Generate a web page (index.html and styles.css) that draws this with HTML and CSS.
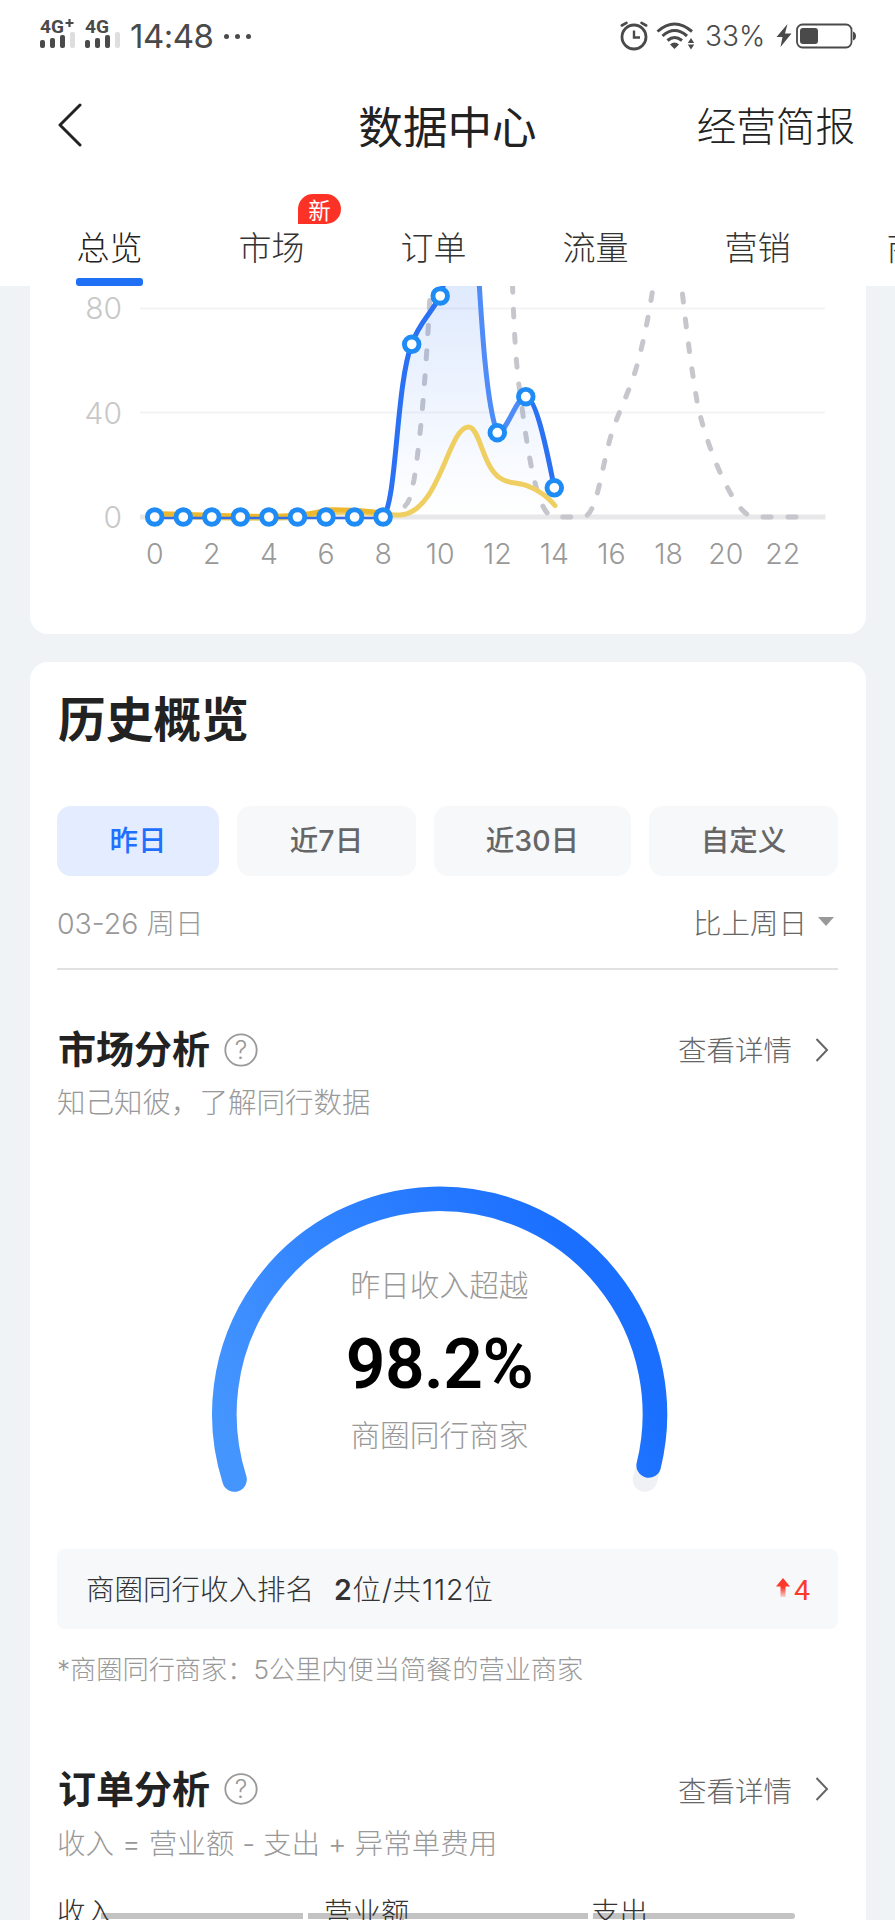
FILE: index.html
```html
<!DOCTYPE html>
<html lang="zh-CN">
<head>
    <meta charset="UTF-8">
    <title>数据中心</title>
    <link rel="stylesheet" href="styles.css">
</head>
<body>

<div id="header">
    <div class="status">
        <svg class="signal" width="86" height="36" viewBox="0 0 86 36">
            <g class="net">
                <text x="0" y="17" textLength="24" lengthAdjust="spacingAndGlyphs">4G</text>
                <text x="45" y="17" textLength="24" lengthAdjust="spacingAndGlyphs">4G</text>
            </g>
            <path d="M29.500 3v8M25.500 7h8" stroke="#4a4a4a" stroke-width="2.200"/>
            <g fill="#4a4a4a">
                <rect x="0" y="24" width="5" height="8" rx="2"/>
                <rect x="10" y="22" width="5" height="10" rx="2"/>
                <rect x="20" y="19" width="5" height="13" rx="2"/>
                <rect x="45" y="24" width="5" height="8" rx="2"/>
                <rect x="55" y="22" width="5" height="10" rx="2"/>
                <rect x="65" y="19" width="5" height="13" rx="2"/>
            </g>
            <g fill="#dedede">
                <rect x="30" y="16" width="5" height="16" rx="2"/>
                <rect x="75" y="16" width="5" height="16" rx="2"/>
            </g>
        </svg>
        <span class="time">14:48</span>
        <span class="dots"><i></i><i></i><i></i></span>
        <svg class="alarm" width="28" height="30" viewBox="0 0 28 30" fill="none" stroke="#4a4a4a" stroke-linecap="round">
            <circle cx="14" cy="16" r="12" stroke-width="2.800"/>
            <path d="M14 9.500v7h6" stroke-width="2.400" stroke-linecap="butt"/>
            <path d="M1.800 4.500L6.500 1.800M26.200 4.500L21.500 1.800" stroke-width="2.600"/>
        </svg>
        <svg class="wifi" width="39" height="28" viewBox="0 0 39 28" fill="none" stroke="#4a4a4a" stroke-width="3">
            <path d="M1.500 9.500Q18.500 -5.500 36 9.500"/>
            <path d="M6.500 14Q18.500 3 31 14"/>
            <path d="M11.500 18.500Q18.500 12.500 26 18.500"/>
            <path d="M14 22.500Q18.500 18.500 23 22.500L18.500 27z" fill="#4a4a4a" stroke="none"/>
            <path d="M35 16l3.200 5h-6.400zM35 27.500l3.200-5h-6.400z" fill="#4a4a4a" stroke="none"/>
        </svg>
        <span class="percent">33%</span>
        <svg class="battery" width="81" height="26" viewBox="0 0 81 26">
            <path d="M11.500 1L0.500 14h6L4.500 24L15.500 10.500H9z" fill="#4a4a4a"/>
            <rect x="21" y="1.500" width="54.500" height="23" rx="5.500" fill="none" stroke="#4a4a4a" stroke-width="1.800"/>
            <rect x="24" y="5" width="18" height="16" rx="3" fill="#4a4a4a"/>
            <path d="M77 8.500q3 1 3 4.500t-3 4.500z" fill="#4a4a4a"/>
        </svg>
    </div>
    <div class="nav">
        <svg class="back" width="26" height="44" viewBox="0 0 26 44">
            <path d="M23 2L3 22L23 42" fill="none" stroke="#222" stroke-width="3" stroke-linecap="round" stroke-linejoin="round"/>
        </svg>
        <h1>数据中心</h1>
        <span class="report">经营简报</span>
    </div>
    <ul id="tab">
        <li class="selected">总览</li>
        <li>市场<em>新</em></li>
        <li>订单</li>
        <li>流量</li>
        <li>营销</li>
        <li>商品</li>
    </ul>
</div>

<div id="chart" class="card">
    <svg width="836" height="348" viewBox="30 286 836 348">
        <defs>
            <linearGradient id="area" gradientUnits="userSpaceOnUse" x1="0" y1="200" x2="0" y2="517">
                <stop offset="0" stop-color="#2670f5" stop-opacity="0.200"/>
                <stop offset="1" stop-color="#2670f5" stop-opacity="0"/>
            </linearGradient>
        </defs>
        <path d="M140 308.500H825M140 412.500H825" stroke="#f3f3f5" stroke-width="2"/>
        <path d="M140 517H825.500" stroke="#e8e8ea" stroke-width="5"/>
        <!-- last week -->
        <g fill="none" stroke="#c6c6cc" stroke-width="5" stroke-linecap="round" stroke-dasharray="8 17">
            <path d="M405 506C411 500 411 492 414 480C422 430 427 355 430.500 286"/>
            <path d="M512.500 284C514 330 516 368 521 400C526 438 536 517 554 517H583C597 517 602 464 611.500 434C620 407 632 388 640 354C646 330 650 308 654 281"/>
            <path d="M682.500 294C687 335 692 372 697 401C704 440 734 517 754 517H804"/>
        </g>
        <!-- today -->
        <path d="M383 517C397 500 396 385 411.500 344C419 323 430 315 440.300 296C450 270 460 170 468 170C475 170 481 410 497.300 432.700C507 433 516 397 525.800 396.700C535 397 545 440 554.300 488V517z" fill="url(#area)"/>
        <path d="M154.700 516C240 518 295 521 326 513C350 510 380 515 400 515C440 513 448 427 468.500 427C480 427 482 466 500 478C510 485 518 481 530 487C540 491 547 496 555 505.500" fill="none" stroke="#f0cf62" stroke-width="5" stroke-linecap="round"/>
        <path d="M154.700 513.500C240 516 295 520 326 510C350 509 370 512 388 513" fill="none" stroke="#eeb82c" stroke-width="5"/>
        <path d="M154.700 518H383" stroke="#2e6fe8" stroke-width="2.500"/>
        <path d="M383.300 517C397 500 396 385 411.700 344C419 323 430 315 440.300 296C450 270 460 170 468 170" fill="none" stroke="#2b71f3" stroke-width="5"/>
        <path d="M468 170C478 170 478 385 497.300 432.700C507 433 516 397 525.800 396.700" fill="none" stroke="#4f8cf8" stroke-width="5"/>
        <path d="M525.800 396.700C535 397 545 440 554.300 488" fill="none" stroke="#2b71f3" stroke-width="5"/>
        <g fill="#fff" stroke="#1f8cf5" stroke-width="4.900">
            <circle cx="154.700" cy="517" r="7.300"/>
            <circle cx="183.300" cy="517" r="7.300"/>
            <circle cx="211.800" cy="517" r="7.300"/>
            <circle cx="240.400" cy="517" r="7.300"/>
            <circle cx="268.900" cy="517" r="7.300"/>
            <circle cx="297.500" cy="517" r="7.300"/>
            <circle cx="326" cy="517" r="7.300"/>
            <circle cx="354.600" cy="517" r="7.300"/>
            <circle cx="383.100" cy="517" r="7.300"/>
            <circle cx="411.700" cy="344.300" r="7.300"/>
            <circle cx="440.200" cy="296" r="7.300"/>
            <circle cx="497.300" cy="432.700" r="7.300"/>
            <circle cx="525.800" cy="396.700" r="7.300"/>
            <circle cx="554.300" cy="487.800" r="7.300"/>
        </g>
        <g class="axis-y">
            <text x="122" y="319">80</text>
            <text x="122" y="423.500">40</text>
            <text x="122" y="527.500">0</text>
        </g>
        <g class="axis-x">
            <text x="154.700" y="563.500">0</text>
            <text x="211.800" y="563.500">2</text>
            <text x="268.900" y="563.500">4</text>
            <text x="326" y="563.500">6</text>
            <text x="383.100" y="563.500">8</text>
            <text x="440.200" y="563.500">10</text>
            <text x="497.300" y="563.500">12</text>
            <text x="554.400" y="563.500">14</text>
            <text x="611.500" y="563.500">16</text>
            <text x="668.600" y="563.500">18</text>
            <text x="725.700" y="563.500">20</text>
            <text x="782.800" y="563.500">22</text>
        </g>
    </svg>
</div>

<div id="history" class="card">
    <h2>历史概览</h2>
    <ul class="range">
        <li class="selected">昨日</li>
        <li>近7日</li>
        <li>近30日</li>
        <li>自定义</li>
    </ul>
    <div class="date">
        <span>03-26 周日</span>
        <span class="compare">比上周日<i></i></span>
    </div>

    <div class="title">
        <h3>市场分析</h3>
        <svg class="help" width="34" height="34" viewBox="0 0 34 34">
            <circle cx="17" cy="17" r="15.700"/>
            <text x="17" y="26">?</text>
        </svg>
        <span class="more">查看详情</span>
        <svg width="14" height="26" viewBox="0 0 14 26"><path d="M1.500 2L12 13L1.500 24" fill="none" stroke="#666" stroke-width="2"/></svg>
    </div>
    <p class="desc">知己知彼，了解同行数据</p>

    <div class="gauge">
        <svg width="460" height="312" viewBox="210 1184 460 312">
            <defs>
                <linearGradient id="arc" gradientUnits="userSpaceOnUse" x1="250" y1="1480" x2="600" y2="1300">
                    <stop offset="0" stop-color="#4595ff"/>
                    <stop offset="1" stop-color="#1a6fff"/>
                </linearGradient>
            </defs>
            <g fill="none" stroke-width="24.600" stroke-linecap="round">
                <path d="M234.500 1479.500A215.300 215.300 0 1 1 645 1479.500" stroke="#eff1f4"/>
                <path d="M234.500 1479.500A215.300 215.300 0 1 1 648.700 1465.500" stroke="url(#arc)"/>
            </g>
        </svg>
        <div class="value">
            <span>昨日收入超越</span>
            <b>98.2%</b>
            <span>商圈同行商家</span>
        </div>
    </div>

    <div class="rank">
        <span>商圈同行收入排名</span>
        <span class="num"><b>2</b>位/共112位</span>
        <span class="up">
            <svg width="14" height="20" viewBox="0 0 14 20">
                <defs>
                    <linearGradient id="fade" x1="0" y1="0" x2="0" y2="1">
                        <stop offset="0.500" stop-color="#fb3a2a"/>
                        <stop offset="1" stop-color="#fb3a2a" stop-opacity="0.200"/>
                    </linearGradient>
                </defs>
                <path d="M7 0L14 8.500H9.500V19H4.500V8.500H0z" fill="url(#fade)"/>
            </svg>4
        </span>
    </div>
    <p class="note">*商圈同行商家：5公里内便当简餐的营业商家</p>

    <div class="title">
        <h3>订单分析</h3>
        <svg class="help" width="34" height="34" viewBox="0 0 34 34">
            <ellipse cx="17" cy="17" rx="15.700" ry="14.800"/>
            <text x="17" y="26">?</text>
        </svg>
        <span class="more">查看详情</span>
        <svg width="14" height="26" viewBox="0 0 14 26"><path d="M1.500 2L12 13L1.500 24" fill="none" stroke="#666" stroke-width="2"/></svg>
    </div>
    <p class="desc">收入 = 营业额 - 支出 + 异常单费用</p>
    <div class="cols">
        <span>收入</span>
        <span>营业额</span>
        <span>支出</span>
        <div class="bars"><i></i><i></i><i></i></div>
    </div>
</div>

</body>
</html>
```

FILE: styles.css
```css
*{
    margin: 0;
    padding: 0;
    box-sizing: border-box;
}
html, body{
    height: 1920px;
    overflow: hidden;
}
body{
    width: 895px;
    background: #eff3f6;
    color: #222;
    font-family: Inter, "Noto Sans CJK SC", sans-serif;
    font-size: 28.5px;
    font-weight: 300;
}
ul{
    list-style: none;
}
i, em{
    font-style: normal;
}
svg{
    display: block;
    flex: none;
}

#header{
    height: 286px;
    background: #fff;
    overflow: hidden;
}
.status{
    display: flex;
    align-items: center;
    height: 72px;
    padding-left: 40px;
    color: #4a4a4a;
}
.signal{
    margin-top: -4px;
    overflow: visible;
}
.net text{
    font: bold 19px Roboto, sans-serif;
    fill: #4a4a4a;
}
.time{
    width: 98px;
    padding-left: 4px;
    font-size: 33px;
    font-weight: 400;
    letter-spacing: -0.5px;
}
.dots{
    display: flex;
    gap: 6px;
    width: 396px;
}
.dots i{
    width: 5px;
    height: 5px;
    border-radius: 50%;
    background: #4a4a4a;
}
.wifi{
    margin-left: 8px;
}
.percent{
    width: 70px;
    margin-left: 10px;
    font-size: 28px;
}
.battery{
    margin-left: 1px;
}
.nav{
    display: grid;
    grid-template-columns: 300px 1fr 300px;
    align-items: center;
    height: 112px;
}
.back{
    margin: -7px 0 0 57px;
}
h1{
    margin-top: -8px;
    font-size: 44.6px;
    font-weight: 400;
    text-align: center;
}
.report{
    margin-top: -9px;
    padding-right: 40px;
    font-size: 39.6px;
    font-weight: 300;
    text-align: right;
}
#tab{
    display: flex;
    padding: 24px 0 0 28px;
}
#tab li{
    flex: none;
    position: relative;
    width: 162px;
    height: 78px;
    padding-left: 1px;
    line-height: 80px;
    font-size: 33px;
    text-align: center;
    color: #333;
}
#tab .selected{
    color: #222;
}
#tab .selected:after{
    content: "";
    position: absolute;
    left: 48px;
    bottom: 0;
    width: 67px;
    height: 8px;
    border-radius: 3px;
    background: #1f70f5;
}
#tab em{
    position: absolute;
    left: 108px;
    top: -14px;
    width: 43px;
    height: 30px;
    line-height: 33px;
    border-radius: 15px 15px 15px 0;
    background: #fc3226;
    color: #fff;
    font-size: 22.5px;
    font-weight: 400;
}

.card{
    width: 836px;
    margin-left: 30px;
    background: #fff;
    border-radius: 18px;
}
#chart{
    height: 348px;
    border-radius: 0 0 18px 18px;
    overflow: hidden;
}
.axis-y text{
    font-size: 30px;
    text-anchor: end;
    fill: #c8c8c8;
}
.axis-x text{
    font-size: 28.5px;
    text-anchor: middle;
    fill: #999;
}

#history{
    height: 1300px;
    margin-top: 28px;
    padding: 28px 28px 0 27px;
}
h2{
    height: 115.5px;
    padding-left: 1px;
    line-height: 60px;
    font-size: 47.7px;
    font-weight: 700;
}
.range{
    display: flex;
    justify-content: space-between;
}
.range li{
    width: 179px;
    height: 70px;
    line-height: 70px;
    border-radius: 14px;
    background: #f6f8fa;
    color: #666;
    font-weight: 500;
    text-align: center;
}
.range li:nth-child(3){
    width: 197px;
}
.range li:nth-child(4){
    width: 189px;
}
.range .selected{
    width: 162px;
    background: #e4edff;
    color: #1f70ff;
}
.date{
    display: flex;
    justify-content: space-between;
    align-items: center;
    height: 94px;
    border-bottom: 2px solid #e0e1e3;
    color: #999;
}
.compare{
    display: flex;
    align-items: center;
    color: #666;
}
.compare i{
    margin: 0 4px 0 11px;
    border: 8px solid transparent;
    border-top: 9px solid #999;
    border-bottom: 0;
}
.title{
    display: flex;
    align-items: center;
    height: 56px;
    margin-top: 52px;
    padding-right: 9px;
}
h3{
    margin-top: -7px;
    padding-left: 1px;
    font-size: 38px;
    font-weight: 700;
}
.help{
    margin-left: 14px;
}
.help circle, .help ellipse{
    fill: none;
    stroke: #999;
    stroke-width: 1.8;
}
.help text{
    font-size: 25px;
    text-anchor: middle;
    fill: #999;
}
.more{
    margin: -3px 23px 0 auto;
    color: #666;
}
.desc{
    height: 50px;
    line-height: 50px;
    color: #999;
}
.gauge{
    position: relative;
    height: 312px;
    margin: 56.5px 0 0 153px;
}
.value{
    position: absolute;
    left: 0;
    top: 83px;
    width: 459px;
    color: #999;
    font-size: 29.7px;
    line-height: 37px;
    text-align: center;
}
.value span, .value b{
    display: block;
}
.value b{
    height: 113px;
    line-height: 122px;
    color: #000;
    font-family: Roboto, sans-serif;
    font-size: 69.5px;
    font-weight: 600;
    letter-spacing: -0.5px;
}
.rank{
    display: flex;
    align-items: center;
    height: 80px;
    margin-top: 53px;
    padding: 0 28px 3px 29px;
    border-radius: 8px;
    background: #f6f8fa;
    color: #333;
}
.num{
    margin-left: 20px;
    letter-spacing: 0.8px;
}
.num b{
    font-weight: 600;
}
.up{
    display: flex;
    align-items: center;
    gap: 4px;
    margin: 5px 0 0 auto;
    color: #fb3a2a;
    font-family: Roboto, sans-serif;
    font-weight: 400;
}
.up svg{
    margin-top: -4px;
}
.note{
    height: 82px;
    line-height: 82px;
    color: #999;
    font-size: 26.2px;
}
.note + .title{
    margin-top: 50px;
}
.note + .title h3{
    margin-top: -5px;
}
.note + .title .more{
    margin-top: 0;
}
.note ~ .desc{
    line-height: 53px;
}
.cols{
    position: relative;
    display: flex;
    padding-top: 23px;
    color: #333;
}
.cols span{
    flex: none;
    position: relative;
    z-index: 1;
    width: 267px;
}
.bars{
    position: absolute;
    left: 44px;
    top: 46px;
    display: flex;
    gap: 5px;
}
.bars i{
    width: 202px;
    height: 6px;
    background: #c3c3c3;
}
.bars i:nth-child(2){
    width: 280px;
}
.bars i:last-child{
    border-radius: 0 3px 3px 0;
}
```
